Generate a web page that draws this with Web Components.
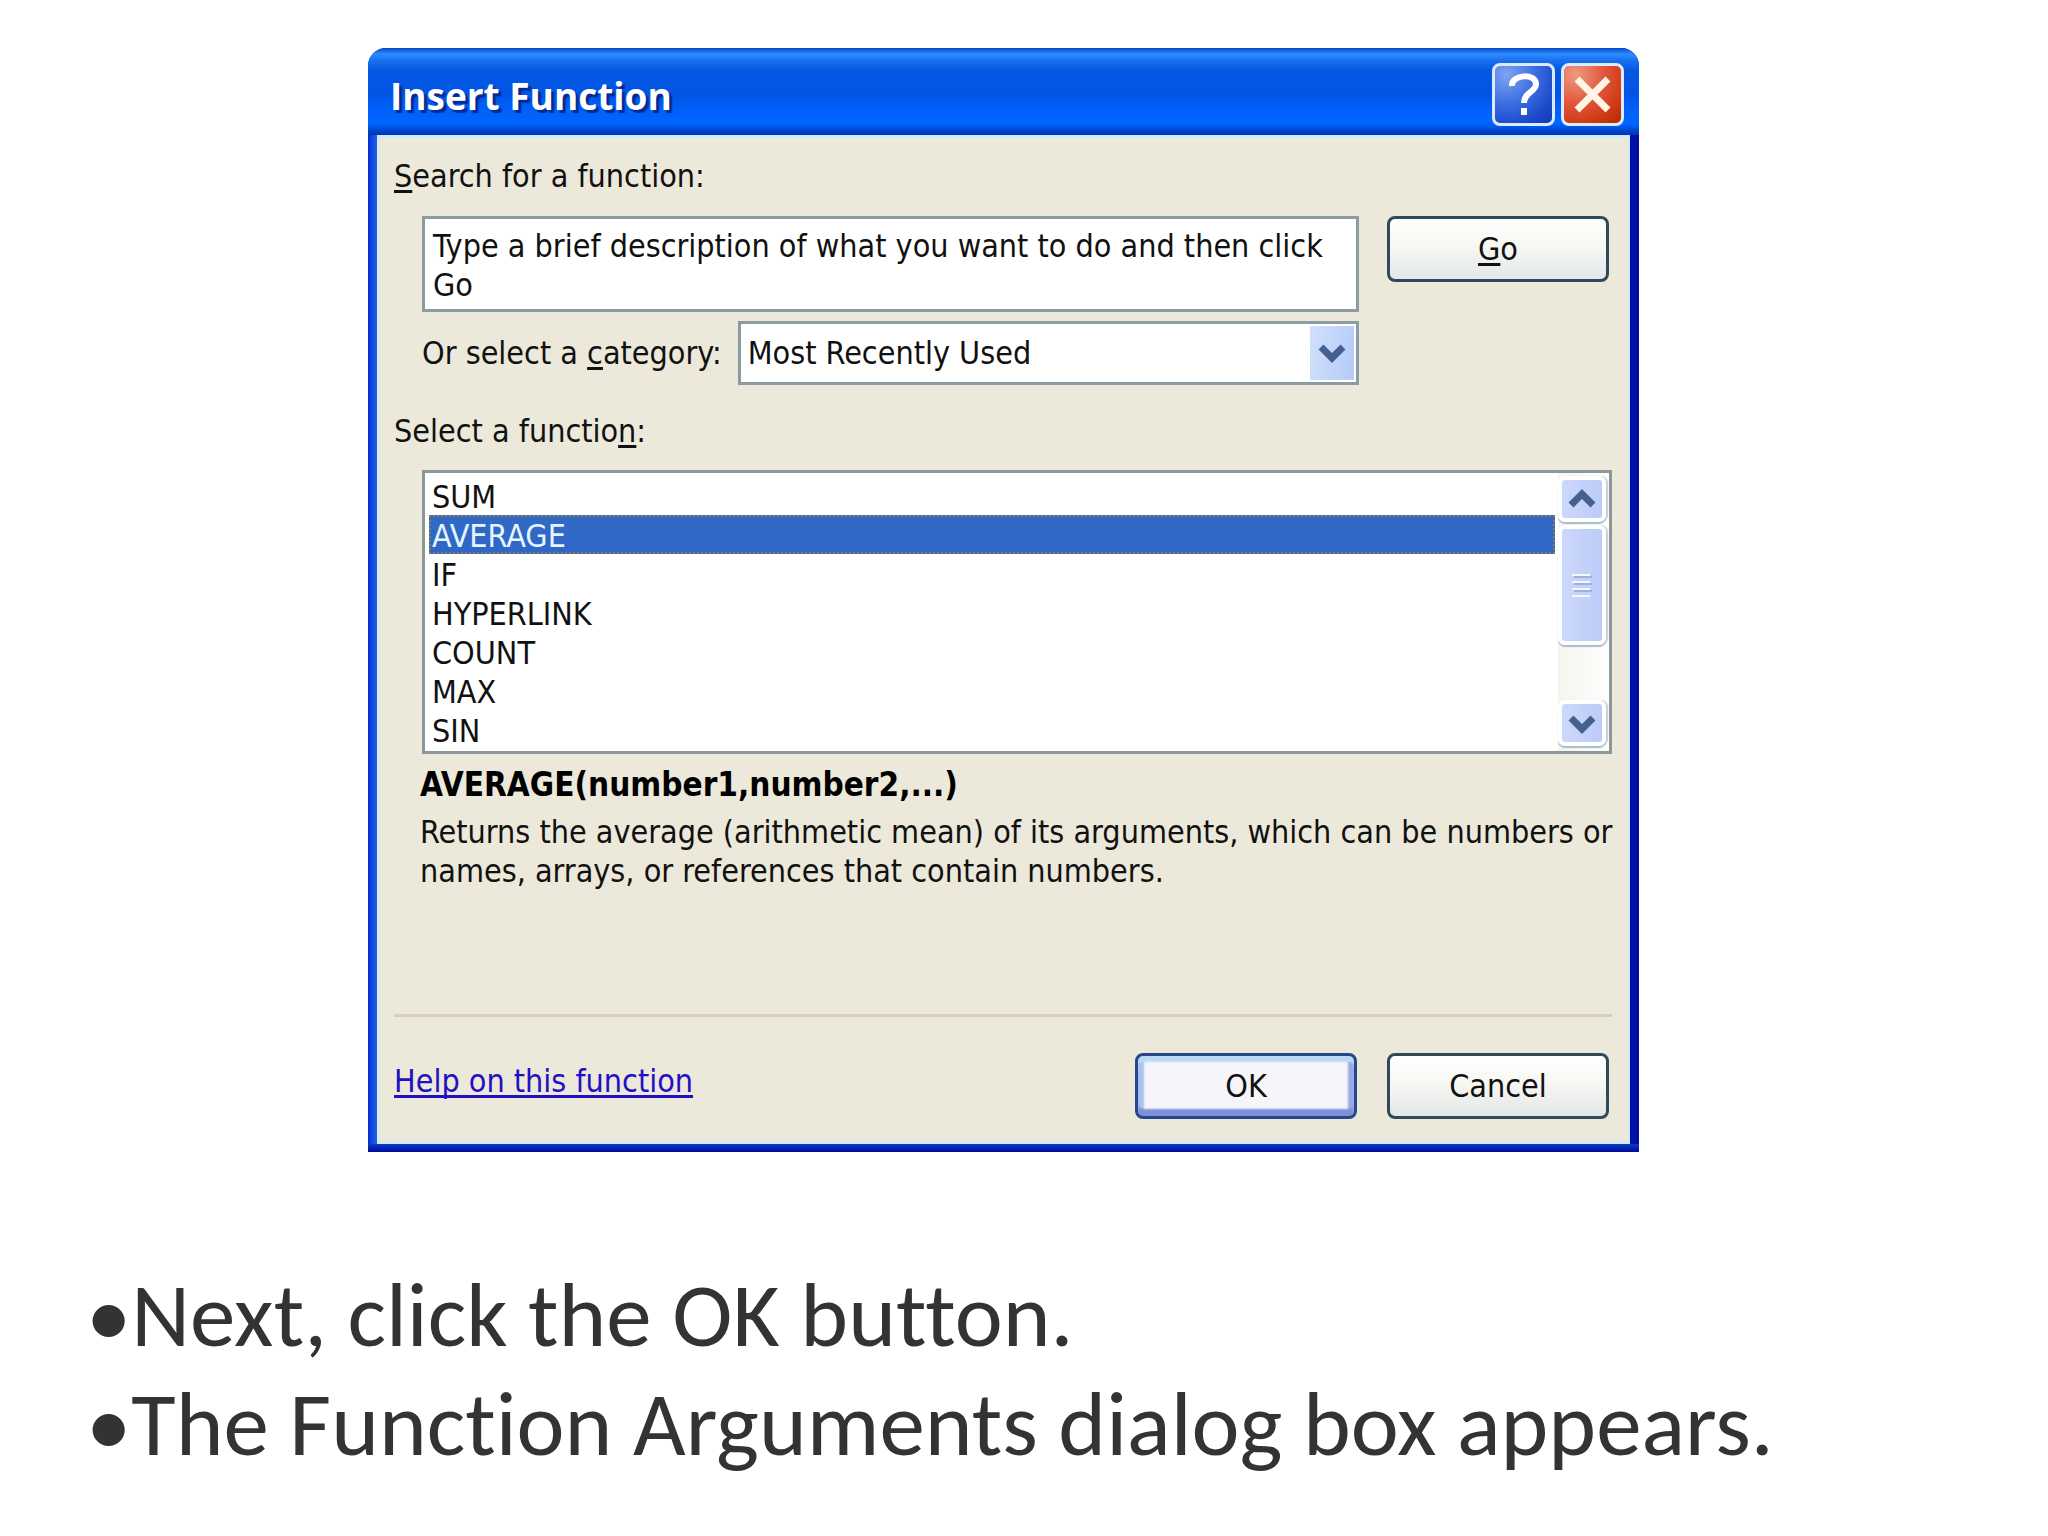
<!DOCTYPE html>
<html lang="en">
<head>
  <meta charset="UTF-8">
  <meta name="viewport" content="width=device-width, initial-scale=1.0">
  <title>Insert Function</title>
  <style>
    body {
      margin: 0;
      background: #fff;
      color: #111;
      font-family: "DejaVu Sans Condensed", "DejaVu Sans", sans-serif;
      font-size: 32px;
      line-height: 39px;
    }
    u {
      text-decoration-thickness: 3px;
      text-underline-offset: 3px;
    }
  </style>
</head>
<body>
  <slide-page>
    <xp-dialog heading="Insert Function">
      <function-search></function-search>
      <function-list></function-list>
      <function-info name="AVERAGE(number1,number2,...)">Returns the average (arithmetic mean) of its arguments, which can be numbers or names, arrays, or references that contain numbers.</function-info>
      <dialog-footer>
        <a slot="help" href="#help">Help on this function</a>
        <xp-button primary>OK</xp-button>
        <xp-button>Cancel</xp-button>
      </dialog-footer>
    </xp-dialog>
    <slide-note slot="notes">Next, click the OK button.</slide-note>
    <slide-note slot="notes">The Function Arguments dialog box appears.</slide-note>
  </slide-page>

  <script>
    class SlidePage extends HTMLElement {
      connectedCallback() {
        this.attachShadow({ mode: 'open' });
        this.shadowRoot.innerHTML = `
          <style>
            :host {
              display: block;
              padding-top: 48px;
            }
            .picture {
              margin: 0 409px 0 368px;
            }
            .notes {
              margin: 108px 86px 0;
            }
          </style>
          <div class="picture"><slot></slot></div>
          <div class="notes" role="list"><slot name="notes"></slot></div>
        `;
      }
    }

    class SlideNote extends HTMLElement {
      connectedCallback() {
        this.attachShadow({ mode: 'open' });
        this.shadowRoot.innerHTML = `
          <style>
            :host {
              display: block;
              color: #323335;
              font-family: Carlito, Lato, sans-serif;
              font-size: 91px;
              font-variant-ligatures: none;
              line-height: 109px;
            }
          </style>
          <span>•</span><slot></slot>
        `;
        this.setAttribute('role', 'listitem');
      }
    }

    class XpDialog extends HTMLElement {
      connectedCallback() {
        this.attachShadow({ mode: 'open' });
        this.shadowRoot.innerHTML = `
          <style>
            :host {
              display: block;
              box-sizing: border-box;
              padding: 0 9px 8px;
              border-radius: 18px 18px 0 0;
              background:
                linear-gradient(#0a3cc0, #00089c) bottom / 100% 8px no-repeat,
                linear-gradient(90deg, #0a28c8 0, #0d4be8 4px, #2a5fd6 9px, #0010a8 calc(100% - 9px), #000f9e 100%);
              overflow: hidden;
            }
            header {
              display: flex;
              align-items: center;
              gap: 6px;
              height: 87px;
              box-sizing: border-box;
              margin: 0 -9px;
              padding: 5px 15px 0 22px;
              background: linear-gradient(#0548c8 0, #2e8cff 6px, #1a72f0 12px, #0558e0 22px, #0055e5 46px, #0060fa 62px, #0066ff 76px, #0048d0 82px, #0035b0 87px);
            }
            h1 {
              flex: 1;
              margin: 0;
              padding-top: 4px;
              color: #fff;
              font-family: "Open Sans", "Noto Sans", sans-serif;
              font-size: 37px;
              font-weight: 700;
              line-height: 46px;
              text-shadow: 3px 3px 1px #062a94;
            }
            button {
              width: 63px;
              height: 63px;
              padding: 0;
              border: 3px solid #dceaff;
              border-radius: 8px;
              background: radial-gradient(circle at 20% 15%, #7da4f2, #3c6ce0 45%, #1c4bcc 75%, #1238b0);
            }
            button.close {
              background: radial-gradient(circle at 20% 15%, #ee9a80, #e0553a 45%, #cf3a14 75%, #b02a08);
            }
            svg {
              display: block;
              width: 57px;
              height: 57px;
            }
            .body {
              padding: 19px 16px 22px 15px;
              border: solid #cfeafc;
              border-width: 3px 2px;
              background: #ece8da;
            }
          </style>
          <header>
            <h1>${this.getAttribute('heading')}</h1>
            <button type="button" aria-label="Help">
              <svg viewBox="0 0 57 57" fill="none" stroke="#fff" stroke-width="6">
                <path d="M17 20C16 8 41 7 41 18C41 26 29 26 29 37"/>
                <path d="M29 42v7"/>
              </svg>
            </button>
            <button type="button" class="close" aria-label="Close">
              <svg viewBox="0 0 57 57" fill="none" stroke="#fff4e6" stroke-width="7">
                <path d="M13 13L44 44M44 13L13 44"/>
              </svg>
            </button>
          </header>
          <div class="body"><slot></slot></div>
        `;
      }
    }

    class XpButton extends HTMLElement {
      connectedCallback() {
        this.attachShadow({ mode: 'open' });
        this.shadowRoot.innerHTML = `
          <style>
            :host {
              display: block;
              width: 222px;
              flex: none;
            }
            button {
              display: block;
              width: 100%;
              height: 66px;
              padding: 0;
              border: 3px solid #2f4a5c;
              border-radius: 8px;
              background: linear-gradient(#fff, #f6f6f2 50%, #e2e7e8);
              color: #111;
              font: inherit;
            }
            :host([primary]) button {
              border-color: #27468c;
              background: #f6f6fa;
              box-shadow: inset 0 6px 2px #bcd8f6, inset 0 -7px 2px #7f90d8, inset 6px 0 2px #a9c2f0, inset -6px 0 2px #98a8e2;
            }
          </style>
          <button type="button"><slot></slot></button>
        `;
      }
    }

    class FunctionSearch extends HTMLElement {
      connectedCallback() {
        this.attachShadow({ mode: 'open' });
        this.shadowRoot.innerHTML = `
          <style>
            :host {
              display: block;
            }
            u {
              text-decoration-thickness: 3px;
              text-underline-offset: 3px;
            }
            label {
              white-space: nowrap;
            }
            .title {
              display: block;
              margin-bottom: 20px;
            }
            .grid {
              display: grid;
              grid-template-columns: 1fr auto;
              gap: 9px 28px;
              margin-left: 28px;
              margin-right: 3px;
              align-items: start;
            }
            textarea, select {
              box-sizing: border-box;
              border: 3px solid #8b9ca4;
              border-radius: 0;
              background: #fff;
              color: #111;
              font: inherit;
            }
            textarea {
              display: block;
              width: 100%;
              height: 96px;
              padding: 8px 8px 2px;
              overflow: hidden;
              resize: none;
            }
            .category {
              display: flex;
              align-items: center;
              gap: 16px;
            }
            .combo {
              display: grid;
              flex: 1;
              align-items: center;
            }
            .combo > * {
              grid-area: 1 / 1;
            }
            select {
              width: 100%;
              height: 64px;
              padding: 0 60px 0 7px;
              appearance: none;
            }
            svg {
              justify-self: end;
              width: 44px;
              height: 54px;
              margin-right: 5px;
              background: linear-gradient(100deg, #d2e0fc, #b4cbf8);
              pointer-events: none;
            }
          </style>
          <label class="title" for="query"><u>S</u>earch for a function:</label>
          <div class="grid">
            <textarea id="query" rows="2">Type a brief description of what you want to do and then click Go</textarea>
            <xp-button><u>G</u>o</xp-button>
            <div class="category">
              <label for="category">Or select a <u>c</u>ategory:</label>
              <div class="combo">
                <select id="category"><option>Most Recently Used</option></select>
                <svg viewBox="0 0 44 54" fill="none" stroke="#45608f" stroke-width="7">
                  <path d="M11 21L22 32L33 21"/>
                </svg>
              </div>
            </div>
          </div>
        `;
      }
    }

    class FunctionList extends HTMLElement {
      connectedCallback() {
        this.attachShadow({ mode: 'open' });
        this.shadowRoot.innerHTML = `
          <style>
            :host {
              display: block;
              margin-top: 27px;
            }
            u {
              text-decoration-thickness: 3px;
              text-underline-offset: 3px;
            }
            label {
              display: block;
              margin-bottom: 19px;
            }
            .box {
              display: flex;
              height: 284px;
              box-sizing: border-box;
              margin-left: 28px;
              border: 3px solid #8b9798;
              background: #fff;
            }
            select {
              flex: 1;
              height: 278px;
              padding: 3px 3px 0 4px;
              border: 0;
              outline: 0;
              background: #fff;
              color: #111;
              font: inherit;
              overflow: hidden;
              scrollbar-width: none;
            }
            option {
              height: 39px;
              min-height: 39px;
              box-sizing: border-box;
              padding: 2px 3px 0;
              line-height: 37px;
            }
            option:checked {
              outline: 2px dotted #8a7a50;
              outline-offset: -2px;
              background: linear-gradient(#316ac5, #2f66c8);
              -webkit-text-fill-color: #e6f6ff;
            }
            .scroll {
              display: flex;
              flex-direction: column;
              width: 48px;
              padding: 3px 3px 5px 0;
              background: linear-gradient(90deg, #f6f4ee, #fff);
            }
            .scroll button, .thumb {
              box-sizing: border-box;
              width: 48px;
              padding: 0;
              border: 4px solid #fff;
              border-radius: 7px;
              background: linear-gradient(90deg, #ccd8fb, #bccbf8);
              box-shadow: 0 2px 1px #a9bccb, 2px 0 1px #c2d2dc;
            }
            .scroll button {
              flex: none;
              height: 46px;
            }
            .thumb {
              display: grid;
              place-items: center;
              height: 120px;
              margin-top: 3px;
            }
            .space {
              flex: 1;
            }
            svg {
              display: block;
              margin: auto;
            }
          </style>
          <label for="functions">Select a functio<u>n</u>:</label>
          <div class="box">
            <select id="functions" size="7">
              <option>SUM</option>
              <option selected>AVERAGE</option>
              <option>IF</option>
              <option>HYPERLINK</option>
              <option>COUNT</option>
              <option>MAX</option>
              <option>SIN</option>
            </select>
            <div class="scroll">
              <button type="button" aria-label="Scroll up">
                <svg width="30" height="30" fill="none" stroke="#45608f" stroke-width="7"><path d="M4 21L15 10L26 21"/></svg>
              </button>
              <div class="thumb">
                <svg width="20" height="24" fill="none" stroke-width="2">
                  <path stroke="#f2f6ff" d="M0 2h18M0 9h18M0 16h18M0 23h18"/>
                  <path stroke="#9db2dc" d="M2 4h18M2 11h18M2 18h18"/>
                </svg>
              </div>
              <div class="space"></div>
              <button type="button" aria-label="Scroll down">
                <svg width="30" height="30" fill="none" stroke="#45608f" stroke-width="7"><path d="M4 10L15 21L26 10"/></svg>
              </button>
            </div>
          </div>
        `;
      }
    }

    class FunctionInfo extends HTMLElement {
      connectedCallback() {
        this.attachShadow({ mode: 'open' });
        this.shadowRoot.innerHTML = `
          <style>
            :host {
              display: block;
              min-height: 249px;
              margin-top: 11px;
              margin-right: -10px;
              padding-left: 26px;
            }
            h2 {
              margin: 0 0 9px;
              color: #000;
              font-size: 33px;
              line-height: 39px;
            }
            p {
              margin: 0;
            }
          </style>
          <h2>${this.getAttribute('name')}</h2>
          <p><slot></slot></p>
        `;
      }
    }

    class DialogFooter extends HTMLElement {
      connectedCallback() {
        this.attachShadow({ mode: 'open' });
        this.shadowRoot.innerHTML = `
          <style>
            :host {
              display: flex;
              align-items: center;
              gap: 30px;
              padding: 36px 3px 0 0;
              border-top: 3px solid #d5cfc2;
            }
            .help {
              flex: 1;
              padding-bottom: 9px;
            }
            ::slotted(a) {
              color: #2310c4;
              text-decoration-thickness: 3px;
              text-underline-offset: 3px;
              text-decoration-skip-ink: none;
            }
          </style>
          <div class="help"><slot name="help"></slot></div>
          <slot></slot>
        `;
      }
    }

    customElements.define('slide-page', SlidePage);
    customElements.define('slide-note', SlideNote);
    customElements.define('xp-dialog', XpDialog);
    customElements.define('xp-button', XpButton);
    customElements.define('function-search', FunctionSearch);
    customElements.define('function-list', FunctionList);
    customElements.define('function-info', FunctionInfo);
    customElements.define('dialog-footer', DialogFooter);
  </script>
</body>
</html>
